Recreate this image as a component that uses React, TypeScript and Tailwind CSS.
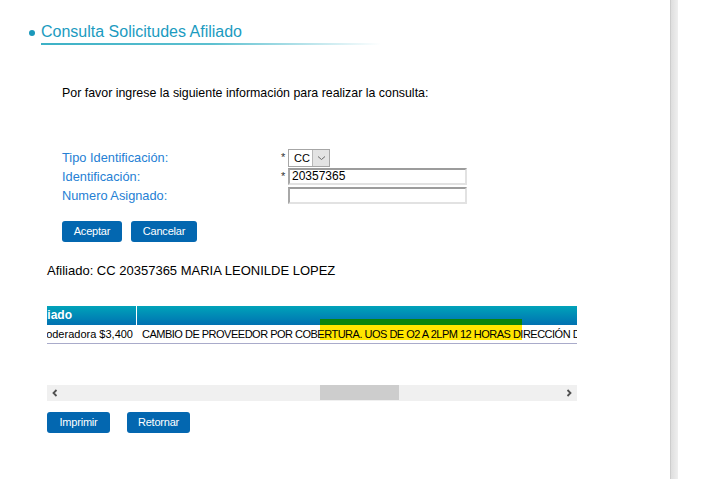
import React from "react";

const font = { fontFamily: '"Liberation Sans", Arial, sans-serif' };

function Btn({ label, w }: { label: string; w: string }) {
  return (
    <div
      className={`${w} h-[21px] rounded-[3px] bg-[#0367b0] text-white text-[11px] leading-[21px] flex items-center justify-center tracking-[-0.2px]`}
    >
      {label}
    </div>
  );
}

export default function App() {
  return (
    <div className="flex h-[479px] w-[701px] bg-white overflow-hidden" style={font}>
      <div className="w-[670px] shrink-0 flex flex-col">
        {/* Title */}
        <div className="flex pl-[29px] pt-[23px]">
          <div className="mt-[7px] mr-[6px] w-[6px] h-[6px] rounded-full bg-[#1a98bb]" />
          <div>
            <div className="text-[16px] leading-[18px] text-[#1b9bbf]">Consulta Solicitudes Afiliado</div>
            <div className="mt-[2px] h-[2px] w-[340px] bg-gradient-to-r from-[#3cb1c6] via-[#5cc0d0] to-transparent" />
          </div>
        </div>

        {/* Intro */}
        <div className="mt-[41px] pl-[62px] text-[12.4px] leading-[14px] text-black">
          Por favor ingrese la siguiente información para realizar la consulta:
        </div>

        {/* Form */}
        <div className="mt-[48px] pl-[62px] flex flex-col text-[12.8px] leading-[19px]">
          <div className="flex items-center h-[19px]">
            <div className="w-[219px] text-[#2580d4]">Tipo Identificación:</div>
            <div className="w-[7px] text-[11px] text-[#333]">*</div>
            <div className="w-[42px] h-[18px] border border-[#a6a6a6] flex bg-white">
              <div className="flex-1 pl-[5px] text-[11px] leading-[16px] text-black">CC</div>
              <div className="w-[17px] h-full bg-[#e3e3e3] border-l border-[#b8b8b8] flex items-center justify-center">
                <svg width="9" height="6" viewBox="0 0 9 6">
                  <path d="M1 1.5 L4.5 4.5 L8 1.5" fill="none" stroke="#6a6a6a" strokeWidth="1" />
                </svg>
              </div>
            </div>
          </div>
          <div className="flex items-center h-[19px]">
            <div className="w-[219px] text-[#2580d4]">Identificación:</div>
            <div className="w-[7px] text-[11px] text-[#333]">*</div>
            <div className="w-[179px] h-[17px] border-2 border-t-[#9c9c9c] border-l-[#a8a8a8] border-b-[#e2e2e2] border-r-[#e2e2e2] pl-[2px] text-[12px] leading-[13px] text-black bg-white">
              20357365
            </div>
          </div>
          <div className="flex items-center h-[19px]">
            <div className="w-[219px] text-[#2580d4]">Numero Asignado:</div>
            <div className="w-[7px]" />
            <div className="w-[179px] h-[17px] border-2 border-t-[#9c9c9c] border-l-[#a8a8a8] border-b-[#e2e2e2] border-r-[#e2e2e2] bg-white" />
          </div>
        </div>

        <div className="mt-[16px] pl-[62px] flex gap-[9px]">
          <Btn label="Aceptar" w="w-[60px]" />
          <Btn label="Cancelar" w="w-[66px]" />
        </div>

        {/* Afiliado */}
        <div className="mt-[21px] pl-[47px] text-[13px] leading-[15px] text-black">
          Afiliado: CC 20357365 MARIA LEONILDE LOPEZ
        </div>

        {/* Table */}
        <div className="mt-[28px] ml-[47px] w-[530px] relative overflow-hidden">
          <div className="ml-[-23px] w-[900px]">
            <div className="flex h-[19px] bg-gradient-to-b from-[#02a3b9] to-[#0271b1] text-white font-bold text-[12px] leading-[19px]">
              <div className="w-[113px] pl-[4px] border-r border-white whitespace-nowrap overflow-hidden">Afiliado</div>
              <div className="flex-1" />
            </div>
            <div className="flex h-[19px] border-b border-[#a9abca] text-[11px] leading-[18px] text-black">
              <div className="w-[113px] pr-[4px] flex justify-end whitespace-nowrap overflow-hidden">
                <span className="relative z-10">Cuota moderadora $3,400</span>
              </div>
              <div className="flex-1 pl-[5px] whitespace-nowrap tracking-[-0.5px]">
                <span className="relative z-10">
                  CAMBIO DE PROVEEDOR POR COBERTURA. UOS DE O2 A 2LPM 12 HORAS DIRECCIÓN DE DOMICILIO
                </span>
              </div>
            </div>
          </div>
          <div className="absolute z-0 left-[273px] top-[13px] w-[202px] h-[6px] bg-[#0a840c]" />
          <div className="absolute z-0 left-[273px] top-[19px] w-[202px] h-[15px] bg-[#ffe600]" />
        </div>

        {/* Scrollbar */}
        <div className="mt-[41px] ml-[47px] w-[530px] h-[16px] bg-[#f0f0f0] flex items-center relative">
          <div className="w-[16px] h-full flex items-center justify-center">
            <svg width="6" height="8" viewBox="0 0 6 8">
              <path d="M4.5 1 L1.5 4 L4.5 7" fill="none" stroke="#505050" strokeWidth="1.8" />
            </svg>
          </div>
          <div className="absolute left-[273px] top-0 w-[79px] h-[15px] bg-[#cdcdcd]" />
          <div className="ml-auto w-[16px] h-full flex items-center justify-center">
            <svg width="6" height="8" viewBox="0 0 6 8">
              <path d="M1.5 1 L4.5 4 L1.5 7" fill="none" stroke="#505050" strokeWidth="1.8" />
            </svg>
          </div>
        </div>

        <div className="mt-[11px] ml-[47px] flex gap-[17px]">
          <Btn label="Imprimir" w="w-[63px]" />
          <Btn label="Retornar" w="w-[63px]" />
        </div>
      </div>
      <div className="w-[8px] shrink-0 h-full border-l border-[#cdcdcd] bg-gradient-to-r from-[#dedede] to-[#efefef]" />
      <div className="flex-1 bg-white" />
    </div>
  );
}
